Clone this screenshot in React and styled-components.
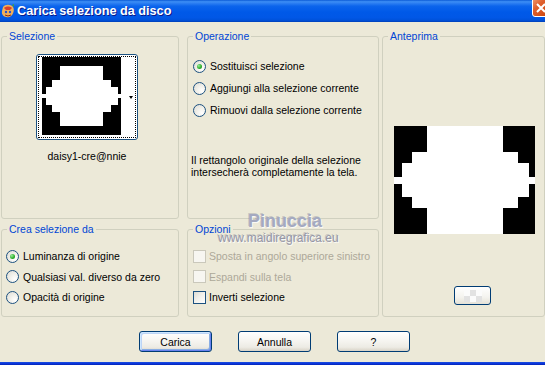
import React from 'react';
import styled, { createGlobalStyle } from 'styled-components';

const Global = createGlobalStyle`
  html, body { margin: 0; padding: 0; }
  body {
    width: 545px; height: 365px; overflow: hidden; background: #ECE9D8;
    font-family: "Liberation Sans", Arial, sans-serif; font-size: 10.5px; color: #000;
  }
  #root { width: 545px; height: 365px; }
  * { box-sizing: border-box; }
`;

const Window = styled.div`
  width: 545px; height: 365px; display: flex; flex-direction: column;
  overflow: hidden; background: #ECE9D8;
`;

const TitleBar = styled.div`
  height: 22px; flex: none; display: flex; align-items: center; overflow: hidden;
  padding-left: 1px;
  background: linear-gradient(to bottom, #0B5BD6 0%, #3D8FF6 8%, #2E80F2 14%, #0B64EC 28%,
    #0059E8 55%, #0157E6 80%, #0051DA 92%, #003FB8 100%);
`;

const TitleText = styled.span`
  margin-left: 2px; color: #fff; font-weight: bold; font-size: 12.7px;
  font-family: "Liberation Sans", Arial, sans-serif;
  text-shadow: 1px 1px 0 #0A1A8A; letter-spacing: 0;
`;

const CloseBtn = styled.div`
  margin-left: auto; margin-right: -9px; align-self: flex-start; margin-top: -4px;
  width: 22px; height: 21px; flex: none; border: 1px solid #fff; border-radius: 3px;
  background: linear-gradient(135deg, #F0A07A 0%, #E0602E 35%, #D14E18 70%, #B83A0C 100%);
  display: flex; align-items: center; justify-content: flex-start; padding: 3px 0 0 3px;
`;

const Body = styled.div`
  flex: 1; position: relative; padding: 14px 0 0 1px;
  display: flex; flex-direction: column;
`;

const BottomEdge = styled.div`
  height: 3px; flex: none; background: linear-gradient(to bottom, #1A4FE0, #0831D9 60%, #0624B0);
`;

const Main = styled.div`
  display: flex; height: 281px;
`;

const LeftGrid = styled.div`
  display: grid; grid-template-columns: 178px 192px; grid-template-rows: 183px 88px;
  column-gap: 8px; row-gap: 10px;
`;

const Group = styled.div`
  position: relative; border: 1px solid #D0D0BF; border-radius: 3px;
  padding: ${p => p.$pad || '0'};
  width: ${p => p.$w || 'auto'};
  margin-left: ${p => p.$ml || '0'};
  display: flex; flex-direction: column; align-items: flex-start;
`;

const Legend = styled.span`
  position: absolute; top: -7px; left: 5px; padding: 0 2px; line-height: 13px;
  background: #ECE9D8; color: #0046D5; white-space: nowrap;
`;

const ThumbColumn = styled.div`
  margin-left: 34px; display: flex; flex-direction: column; align-items: center;
`;

const ThumbFrame = styled.div`
  width: 102px; height: 86px; padding: 1px;
  border: 1px solid #1C5180; border-radius: 3px; background: #fff;
`;

const Dotted = styled.div`
  width: 100%; height: 100%; border: 1px dotted #000;
  display: flex; align-items: flex-start; padding: 0 2px 0 3px;
`;

const DropArrow = styled.span`
  margin-left: auto; margin-top: 39px; width: 0; height: 0;
  border-left: 2.5px solid transparent; border-right: 2.5px solid transparent;
  border-top: 3px solid #000;
`;

const Caption = styled.div`
  margin-top: 10px; line-height: 13px; white-space: nowrap;
`;

const OptionList = styled.div`
  display: flex; flex-direction: column; padding-left: ${p => p.$pl || 0}px;
`;

const OptionRow = styled.div`
  display: flex; align-items: center; height: ${p => p.$h}px; gap: ${p => p.$gap || 4}px;
  white-space: nowrap; color: ${p => (p.$disabled ? '#ACA899' : '#000')};
`;

const RadioCircle = styled.span`
  width: 13px; height: 13px; flex: none; border-radius: 50%;
  border: 1px solid #1C5180;
  background: radial-gradient(circle at 72% 72%, #FFFFFF 0%, #F4F3EE 35%, #DCDBD3 100%);
  display: flex; align-items: center; justify-content: center;
`;

const RadioDot = styled.span`
  width: 5px; height: 5px; border-radius: 50%;
  background: radial-gradient(circle at 35% 35%, #9AEB9A 0%, #2DB02D 55%, #178717 100%);
`;

const CheckBox = styled.span`
  width: 13px; height: 13px; flex: none;
  border: 1px solid ${p => (p.$disabled ? '#CAC8BB' : '#1C5180')};
  background: ${p => (p.$disabled
    ? '#F7F6F1'
    : 'linear-gradient(135deg, #DCDBD3 0%, #F0EFEA 45%, #FFFFFF 100%)')};
`;

const Note = styled.p`
  margin: ${p => p.$mt}px 0 0 0; line-height: 12px;
`;

const PreviewBox = styled.div`
  margin: 89px 0 0 11px; width: 141px; height: 108px; line-height: 0;
`;

const SmallButton = styled.div`
  margin: 52px 0 0 71px; width: 37px; height: 19px;
  border: 1px solid #003C74; border-radius: 3px;
  background: linear-gradient(#FFFFFF, #F4F3EE 60%, #E4E1D6);
  display: flex; align-items: center; justify-content: center;
`;

const Checker = styled.span`
  width: 18px; height: 12px;
  background: conic-gradient(#E2E2E2 25%, #FBFBFB 0 50%, #E2E2E2 0 75%, #FBFBFB 0) 0 0 / 12px 12px;
`;

const ButtonsRow = styled.div`
  margin-top: 14px; display: flex; justify-content: center; gap: 26px; padding-left: 3px;
`;

const Button = styled.button`
  width: 73px; height: 21px; padding: 0; margin: 0;
  font-family: "Liberation Sans", Arial, sans-serif; font-size: 10.5px; color: #000;
  border: 1px solid #003C74; border-radius: 3px;
  background: linear-gradient(#FFFFFF 0%, #F6F5F1 45%, #EDEBE4 80%, #D8D2C6 100%);
  box-shadow: ${p => (p.$default
    ? 'inset 1px 1px 0 #CEE7FF, inset -1px -1px 0 #6982EE, inset 2px 2px 0 #BCD4F6, inset -2px -2px 0 #89ADE4'
    : 'none')};
`;

const Watermark = styled.div`
  position: absolute; left: ${p => p.$x}px; top: ${p => p.$y}px; pointer-events: none;
  white-space: nowrap; font-family: "Liberation Sans", Arial, sans-serif;
  font-size: ${p => p.$size}px; line-height: ${p => p.$lh}px;
  font-weight: ${p => p.$weight || 'normal'}; color: ${p => p.$color};
  letter-spacing: ${p => p.$ls || 0}px;
  text-shadow: 1px 1px 0 rgba(255,255,255,0.8), -1px -1px 0 rgba(110,115,140,0.3);
`;

const shapePath =
  'M33 0 H109 V26 H124 V37 H135 V51 H141 V58 H135 V71 H124 V82 H109 V108 H33 V82 H18 V71 H8 V58 H0 V51 H8 V37 H18 V26 H33 Z';

function SelectionImage({ width, height, padY = 0 }) {
  return (
    <svg width={width} height={height} viewBox={`0 ${-padY} 141 ${108 + padY * 2}`}
      preserveAspectRatio="none" shapeRendering="crispEdges" style={{ display: 'block', flex: 'none' }}>
      <rect x="0" y={-padY} width="141" height={108 + padY * 2} fill="#000" />
      <path d={shapePath} fill="#fff" />
    </svg>
  );
}

function AppIcon() {
  return (
    <svg width="14" height="15" viewBox="0 0 14 15" style={{ flex: 'none' }}>
      <path d="M2 3 C4 0 10 0 12 3 C14 6 12 12 8 13 C4 14 0 11 1 7 Z" fill="#F1B05A" />
      <path d="M3 4 C5 2 9 2 11 4 L9 6 L5 6 Z" fill="#D8402A" />
      <circle cx="5" cy="8" r="1.2" fill="#2A52C8" />
      <circle cx="9" cy="8" r="1.2" fill="#2A52C8" />
      <path d="M4 11 Q7 13 10 11" stroke="#8A2A10" strokeWidth="1" fill="none" />
      <path d="M11 1 L13 0 L13 3 Z" fill="#3FA03F" />
    </svg>
  );
}

function Radio({ checked }) {
  return <RadioCircle>{checked && <RadioDot />}</RadioCircle>;
}

export default function App() {
  return (
    <>
      <Global />
      <Window>
        <TitleBar>
          <AppIcon />
          <TitleText>Carica selezione da disco</TitleText>
          <CloseBtn>
            <svg width="10" height="10" viewBox="0 0 10 10">
              <path d="M1 1 L9 9 M9 1 L1 9" stroke="#fff" strokeWidth="2" />
            </svg>
          </CloseBtn>
        </TitleBar>
        <Body>
          <Main>
            <LeftGrid>
              <Group $pad="17px 0 0 0">
                <Legend>Selezione</Legend>
                <ThumbColumn>
                  <ThumbFrame>
                    <Dotted>
                      <SelectionImage width={79} height={78} padY={16} />
                      <DropArrow />
                    </Dotted>
                  </ThumbFrame>
                  <Caption>daisy1-cre@nnie</Caption>
                </ThumbColumn>
              </Group>

              <Group $pad="18px 0 0 3px">
                <Legend>Operazione</Legend>
                <OptionList $pl={2}>
                  <OptionRow $h={22}><Radio checked />Sostituisci selezione</OptionRow>
                  <OptionRow $h={22}><Radio />Aggiungi alla selezione corrente</OptionRow>
                  <OptionRow $h={22}><Radio />Rimuovi dalla selezione corrente</OptionRow>
                </OptionList>
                <Note $mt={33}>
                  Il rettangolo originale della selezione<br />
                  intersecherà completamente la tela.
                </Note>
              </Group>

              <Group $pad="16px 0 0 4px">
                <Legend>Crea selezione da</Legend>
                <OptionList>
                  <OptionRow $h={20.5}><Radio checked />Luminanza di origine</OptionRow>
                  <OptionRow $h={20.5}><Radio />Qualsiasi val. diverso da zero</OptionRow>
                  <OptionRow $h={20.5}><Radio />Opacità di origine</OptionRow>
                </OptionList>
              </Group>

              <Group $pad="16px 0 0 5px">
                <Legend>Opzioni</Legend>
                <OptionList>
                  <OptionRow $h={20.5} $gap={3} $disabled><CheckBox $disabled />Sposta in angolo superiore sinistro</OptionRow>
                  <OptionRow $h={20.5} $gap={3} $disabled><CheckBox $disabled />Espandi sulla tela</OptionRow>
                  <OptionRow $h={20.5} $gap={3}><CheckBox />Inverti selezione</OptionRow>
                </OptionList>
              </Group>
            </LeftGrid>

            <Group $w="175px" $ml="3px">
              <Legend>Anteprima</Legend>
              <PreviewBox>
                <SelectionImage width={141} height={108} />
              </PreviewBox>
              <SmallButton><Checker /></SmallButton>
            </Group>
          </Main>

          <ButtonsRow>
            <Button $default>Carica</Button>
            <Button>Annulla</Button>
            <Button>?</Button>
          </ButtonsRow>

          <Watermark $x={248} $y={189} $size={18} $lh={20} $weight="bold" $color="#A4A9C0">Pinuccia</Watermark>
          <Watermark $x={218} $y={209} $size={12} $lh={14} $color="#9596A6">www.maidiregrafica.eu</Watermark>
        </Body>
        <BottomEdge />
      </Window>
    </>
  );
}
